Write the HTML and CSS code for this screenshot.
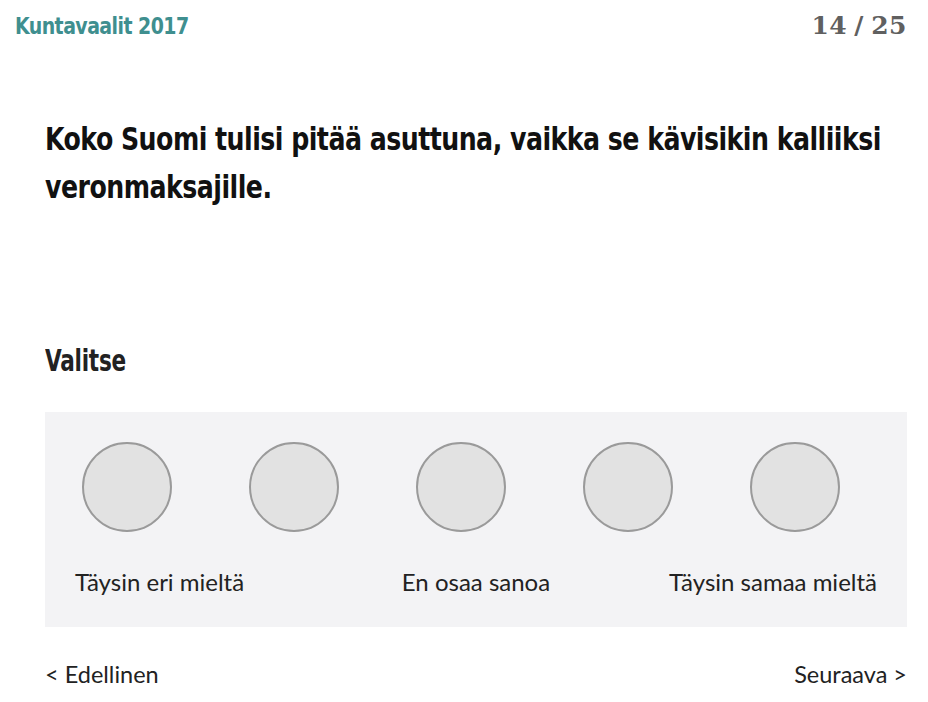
FILE: index.html
```html
<!DOCTYPE html>
<html lang="fi">
<head>
<meta charset="utf-8">
<link rel="stylesheet" href="styles.css">
</head>
<body>
<div class="page">
  <header class="top">
    <div class="brand">Kuntavaalit 2017</div>
    <div class="count">14 / 25</div>
  </header>
  <h1 class="question">Koko Suomi tulisi pitää asuttuna, vaikka se kävisikin kalliiksi veronmaksajille.</h1>
  <h2 class="choose">Valitse</h2>
  <section class="panel">
    <div class="circles">
      <span class="opt"></span>
      <span class="opt"></span>
      <span class="opt"></span>
      <span class="opt"></span>
      <span class="opt"></span>
    </div>
    <div class="labels">
      <span class="lab-left">Täysin eri mieltä</span>
      <span class="lab-mid">En osaa sanoa</span>
      <span class="lab-right">Täysin samaa mieltä</span>
    </div>
  </section>
  <nav class="nav">
    <span>&lt; Edellinen</span>
    <span>Seuraava &gt;</span>
  </nav>
</div>
</body>
</html>
```

FILE: styles.css
```css
html, body {
  margin: 0;
  padding: 0;
  background: #ffffff;
}
.page {
  width: 928px;
  height: 702px;
  box-sizing: border-box;
  padding: 0 21px 0 45px;
  display: flex;
  flex-direction: column;
  overflow: hidden;
}
.top {
  display: flex;
  justify-content: space-between;
  align-items: baseline;
  margin-left: -30px;
  height: 60px;
  padding-top: 11px;
  box-sizing: border-box;
}
.brand {
  font-family: "DejaVu Sans Condensed", "DejaVu Sans", sans-serif;
  font-stretch: condensed;
  font-weight: bold;
  font-size: 23px;
  color: #3f8f8f;
  letter-spacing: -0.6px;
  transform: scaleX(0.915);
  transform-origin: left center;
}
.count {
  font-family: "DejaVu Serif", "Liberation Serif", serif;
  font-weight: bold;
  font-size: 25px;
  color: #606060;
  letter-spacing: 0.5px;
  word-spacing: -2px;
}
.question {
  align-self: flex-start;
  width: 983px;
  margin: 55px 0 0 0;
  font-family: "DejaVu Sans Condensed", "DejaVu Sans", sans-serif;
  font-stretch: condensed;
  font-weight: bold;
  font-size: 32px;
  line-height: 48px;
  color: #111;
  letter-spacing: -0.6px;
  transform: scaleX(0.877);
  transform-origin: left top;
}
.choose {
  align-self: flex-start;
  margin: 132px 0 0 0;
  font-family: "DejaVu Sans Condensed", "DejaVu Sans", sans-serif;
  font-stretch: condensed;
  font-weight: bold;
  font-size: 30px;
  line-height: 36px;
  color: #222;
  letter-spacing: -0.3px;
  transform: scaleX(0.8);
  transform-origin: left center;
}
.panel {
  margin-top: 33px;
  background: #f3f3f5;
  height: 215px;
  box-sizing: border-box;
  padding: 30px 30px 0 37px;
}
.circles {
  display: flex;
  gap: 77px;
}
.opt {
  width: 86px;
  height: 86px;
  border-radius: 50%;
  border: 2px solid #9a9a9a;
  background: #e2e2e2;
}
.labels {
  display: grid;
  grid-template-columns: 1fr auto 1fr;
  margin-top: 35px;
  margin-left: -7px;
  font-family: Lato, "Open Sans", sans-serif;
  font-size: 24px;
  line-height: 30px;
  color: #222;
}
.lab-left { justify-self: start; }
.lab-right { justify-self: end; }
.nav {
  display: flex;
  justify-content: space-between;
  margin-top: 33px;
  font-family: Lato, "Open Sans", sans-serif;
  font-size: 23.5px;
  color: #222;
}
```
